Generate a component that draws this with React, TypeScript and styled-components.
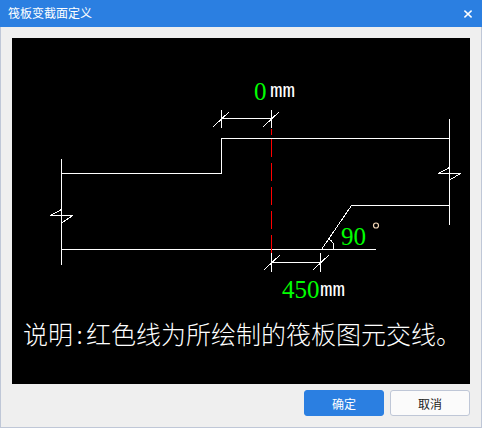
import React from "react";
import styled, { createGlobalStyle } from "styled-components";

const GlobalStyle = createGlobalStyle`
  * { box-sizing: border-box; }
  html, body, #root { height: 100%; margin: 0; }
  body { font-family: "Liberation Sans", "Noto Sans CJK SC", sans-serif; font-size: 12px; }
`;

const Dialog = styled.div`
  display: flex;
  flex-direction: column;
  min-height: 100%;
  background: #efefef;
`;

const TitleBar = styled.header`
  display: flex;
  align-items: center;
  justify-content: space-between;
  height: 27px;
  padding: 0 8px;
  background: #2b7fe1;
  color: #fff;
`;

const Title = styled.h1`
  margin: 0;
  font-size: 12px;
  font-weight: 400;
  line-height: 18px;
`;

const CloseButton = styled.button`
  display: flex;
  align-items: center;
  justify-content: center;
  width: 12px;
  height: 16px;
  padding: 0;
  border: 0;
  background: transparent;
  color: inherit;
`;

const Body = styled.main`
  display: flex;
  flex: 1;
  flex-direction: column;
  gap: 6px;
  padding: 11px;
  border: 1px solid #bfc7d7;
  border-top: 0;
`;

const Canvas = styled.figure`
  margin: 0;
  padding-bottom: 34px;
  background: #000;
  color: #fff;
`;

const Drawing = styled.svg`
  display: block;
  width: 100%;
  height: auto;
`;

const Lines = styled.g`
  fill: none;
  stroke: #fff;
  stroke-width: 1px;
  shape-rendering: crispEdges;
`;

const IntersectionLine = styled.path`
  stroke: #f00;
`;

const Value = styled.text`
  fill: #0f0;
  font-family: "Liberation Serif", serif;
  font-size: 25px;
`;

const Unit = styled.text`
  fill: #fff;
  font-family: "Liberation Mono", monospace;
  font-size: 21px;
`;

const Caption = styled.figcaption`
  display: flex;
  padding-left: 11px;
  font-size: 25px;
  font-weight: 300;
  line-height: 34px;
  white-space: nowrap;
  font-family: "Noto Sans CJK SC", sans-serif;
`;

const Colon = styled.span`
  width: 13px;
  text-align: center;
`;

const Footer = styled.footer`
  display: flex;
  justify-content: flex-end;
  gap: 6px;
`;

const Button = styled.button<{ $primary?: boolean }>`
  width: 80px;
  height: 26px;
  padding: 0;
  border: 1px solid ${(p) => (p.$primary ? "#2b7fe1" : "#bfc7d7")};
  border-radius: 3px;
  background: ${(p) => (p.$primary ? "#2b7fe1" : "#fbfbfb")};
  color: ${(p) => (p.$primary ? "#fff" : "#222")};
  font: inherit;
`;

export default function App() {
  return (
    <>
      <GlobalStyle />
      <Dialog role="dialog" aria-labelledby="dialog-title">
        <TitleBar>
          <Title id="dialog-title">筏板变截面定义</Title>
          <CloseButton type="button" aria-label="关闭">
            <svg width="8" height="8" viewBox="0 0 8 8" stroke="currentColor" strokeWidth="1.6">
              <path d="M0.4 0.6L7.6 7.4M7.6 0.6L0.4 7.4" />
            </svg>
          </CloseButton>
        </TitleBar>
        <Body>
          <Canvas>
            <Drawing viewBox="12 38 458 278">
              <Lines transform="translate(0.5 0.5)">
                {/* slab outline */}
                <path d="M61 173H221V138H449" />
                <path d="M61 249H375M321 249L351 205H449" />
                {/* break lines */}
                <path d="M61 158V264M61 209L50 215H72L62 222" />
                <path d="M449 118V224M449 167L438 173H460L450 179" />
                {/* upper dimension */}
                <path d="M221 109V127M271 109V127M221 118H271M213 126L229 111M263 126L279 111" />
                {/* lower dimension */}
                <path d="M271 252V271M320 252V271M271 262H320M264 269L280 254M313 269L329 254" />
                {/* angle */}
                <path d="M328 239C332 240 334 244 333 249" />
                <IntersectionLine d="M271 128V134" />
                <IntersectionLine d="M271 138V252" strokeDasharray="18 6" />
              </Lines>
              <Value x="254" y="100">0</Value>
              <Unit x="270" y="97">mm</Unit>
              <Value x="341" y="245">90</Value>
              <circle cx="376" cy="225.5" r="2.5" fill="none" stroke="#f4d8b8" strokeWidth="1.2" />
              <Value x="282" y="298">450</Value>
              <Unit x="320" y="296">mm</Unit>
            </Drawing>
            <Caption>
              <span>说明</span>
              <Colon>:</Colon>
              <span>红色线为所绘制的筏板图元交线。</span>
            </Caption>
          </Canvas>
          <Footer>
            <Button type="button" $primary>确定</Button>
            <Button type="button">取消</Button>
          </Footer>
        </Body>
      </Dialog>
    </>
  );
}
